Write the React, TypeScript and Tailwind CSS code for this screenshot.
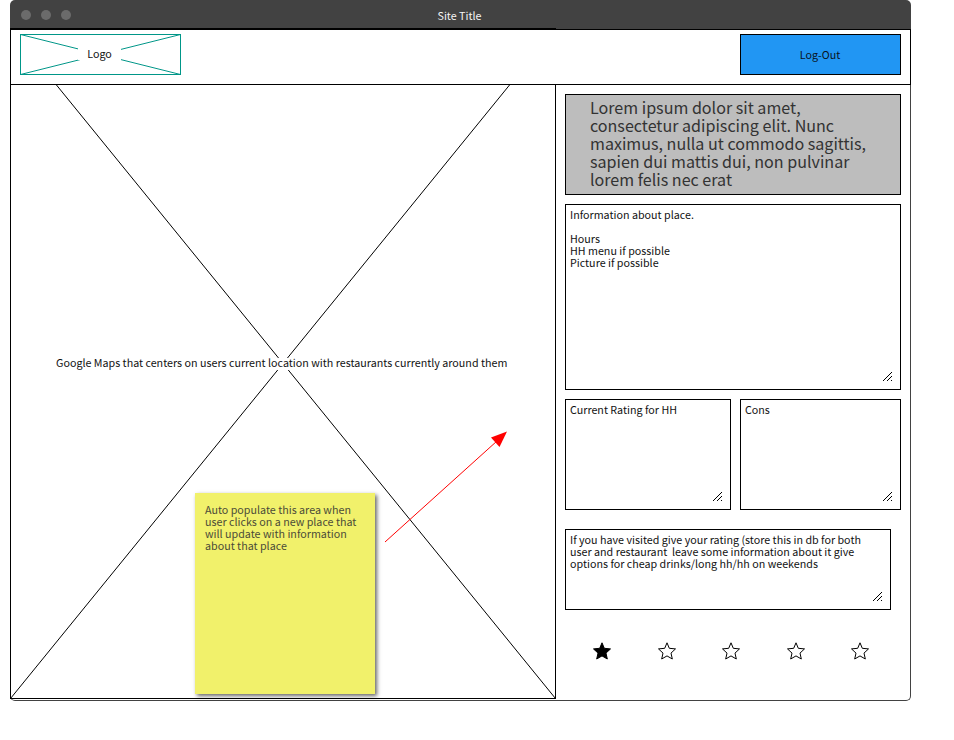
import type { ReactNode } from "react";

const GRIP_PIXELS = [
  [0, 8], [1, 7], [2, 6], [3, 5], [4, 4], [5, 3], [6, 2], [7, 1], [8, 0],
  [4, 8], [5, 7], [6, 6], [7, 5], [8, 4],
  [8, 8],
];

function ResizeGrip() {
  return (
    <svg className="absolute right-[8px] bottom-[8px]" width="9" height="9" viewBox="0 0 9 9" shapeRendering="crispEdges">
      {GRIP_PIXELS.map(([x, y]) => (
        <rect key={`${x}-${y}`} x={x} y={y} width="1" height="1" fill="#000" />
      ))}
    </svg>
  );
}

function TextBox({ className, children }: { className: string; children: ReactNode }) {
  return (
    <div className={`relative border border-black pl-1 pt-1 whitespace-pre text-[#111] ${className}`}>
      {children}
      <ResizeGrip />
    </div>
  );
}

const STAR = "M9 0.8 L11.3 6.3 L17.5 6.9 L13 11.1 L14.3 17 L9 13.9 L3.7 17 L5 11.1 L0.5 6.9 L6.7 6.3 Z";

function Star({ filled }: { filled: boolean }) {
  return (
    <svg width="18" height="18" viewBox="0 0 18 18" fill={filled ? "#000" : "none"} stroke="#000" strokeWidth="1">
      <path d={STAR} />
    </svg>
  );
}

export default function App() {
  return (
    <div className="h-[740px] w-[954px] bg-white pl-[10px] text-[10.73px] leading-[12px] [font-family:'Noto_Sans_CJK_SC','Noto_Sans',sans-serif]">
      <div className="flex h-[701px] w-[901px] flex-col">
        <div className="flex h-[29px] flex-col rounded-t-[5px] bg-[#424242]">
          <div className="grid h-[28px] grid-cols-[70px_1fr_70px] items-center pt-[2px]">
            <div className="flex gap-[10px] pl-[11.4px]">
              <span className="size-[10px] rounded-full bg-[#6b6b6b]" />
              <span className="size-[10px] rounded-full bg-[#6b6b6b]" />
              <span className="size-[10px] rounded-full bg-[#6b6b6b]" />
            </div>
            <div className="pt-[2px] pr-[2px] text-center text-[#f5f5f5]">Site Title</div>
          </div>
          <div className="h-px w-[546px] bg-black" />
        </div>

        <header className="flex h-[56px] shrink-0 items-start justify-between border border-black px-[9px] pt-[4px]">
          <div className="relative flex h-[41px] w-[161px] items-center justify-center">
            <svg className="absolute inset-0" width="161" height="41" fill="none" stroke="#009688">
              <rect x="0.5" y="0.5" width="160" height="40" />
              <path d="M0.5 0.5 L160.5 40.5 M0.5 40.5 L160.5 0.5" />
            </svg>
            <span className="relative mr-[2px] mb-px bg-white px-[9px] text-[#111]">Logo</span>
          </div>
          <button className="h-[41px] w-[161px] border border-black bg-[#2196f3] pr-px text-[#0a131c]">Log-Out</button>
        </header>

        <div className="flex h-[616px] shrink-0 rounded-b-[5px] border-r border-b border-[#424242]">
          <main className="relative h-[614px] w-[546px] shrink-0 border-x border-b border-black">
            <svg className="absolute top-0 -left-px" width="546" height="614" viewBox="10 85 546 614" stroke="#000" fill="none">
              <path d="M10.5 28.5 L555.5 698.5 M555.5 28.5 L10.5 698.5" />
            </svg>
            <div className="absolute top-[273px] left-[45px] h-[12px] bg-white leading-[10px] whitespace-nowrap text-[#111]">
              Google Maps that centers on users current location with restaurants currently around them
            </div>
            <div className="absolute top-[408px] left-[184px] h-[201px] w-[180px] bg-[#f1f16b] pt-[11px] pl-[10px] whitespace-pre text-[#4b4b38] shadow-[2px_2px_4px_rgba(0,0,0,0.6)]">
              {"Auto populate this area when\nuser clicks on a new place that\nwill update with information\nabout that place"}
            </div>
            <svg className="absolute top-[345px] left-[372px]" width="128" height="115" viewBox="383 430 128 115">
              <path d="M385 542 L497 441" stroke="#f00" />
              <path d="M507 431.5 L491 437.5 L499.5 447 Z" fill="#f00" />
            </svg>
          </main>

          <aside className="flex w-[345px] flex-col gap-[9px] pt-[9px] pl-[9px]">
            <div className="h-[101px] w-[336px] border border-black bg-[#bdbdbd] pt-[3px] pl-[24px] text-[16.08px] leading-[18px] whitespace-pre text-[#333]">
              {"Lorem ipsum dolor sit amet,\nconsectetur adipiscing elit. Nunc\nmaximus, nulla ut commodo sagittis,\nsapien dui mattis dui, non pulvinar\nlorem felis nec erat"}
            </div>
            <TextBox className="h-[186px] w-[336px]">
              {"Information about place.\n\nHours\nHH menu if possible\nPicture if possible"}
            </TextBox>
            <div className="flex gap-[9px]">
              <TextBox className="h-[111px] w-[166px]">Current Rating for HH</TextBox>
              <TextBox className="h-[111px] w-[161px]">Cons</TextBox>
            </div>
            <TextBox className="mt-[10px] h-[81px] w-[326px]">
              {"If you have visited give your rating (store this in db for both\nuser and restaurant  leave some information about it give\noptions for cheap drinks/long hh/hh on weekends"}
            </TextBox>
            <div className="mt-[23px] flex gap-[46.6px] pl-[28px]">
              {[true, false, false, false, false].map((filled, i) => (
                <Star key={i} filled={filled} />
              ))}
            </div>
          </aside>
        </div>
      </div>
    </div>
  );
}
